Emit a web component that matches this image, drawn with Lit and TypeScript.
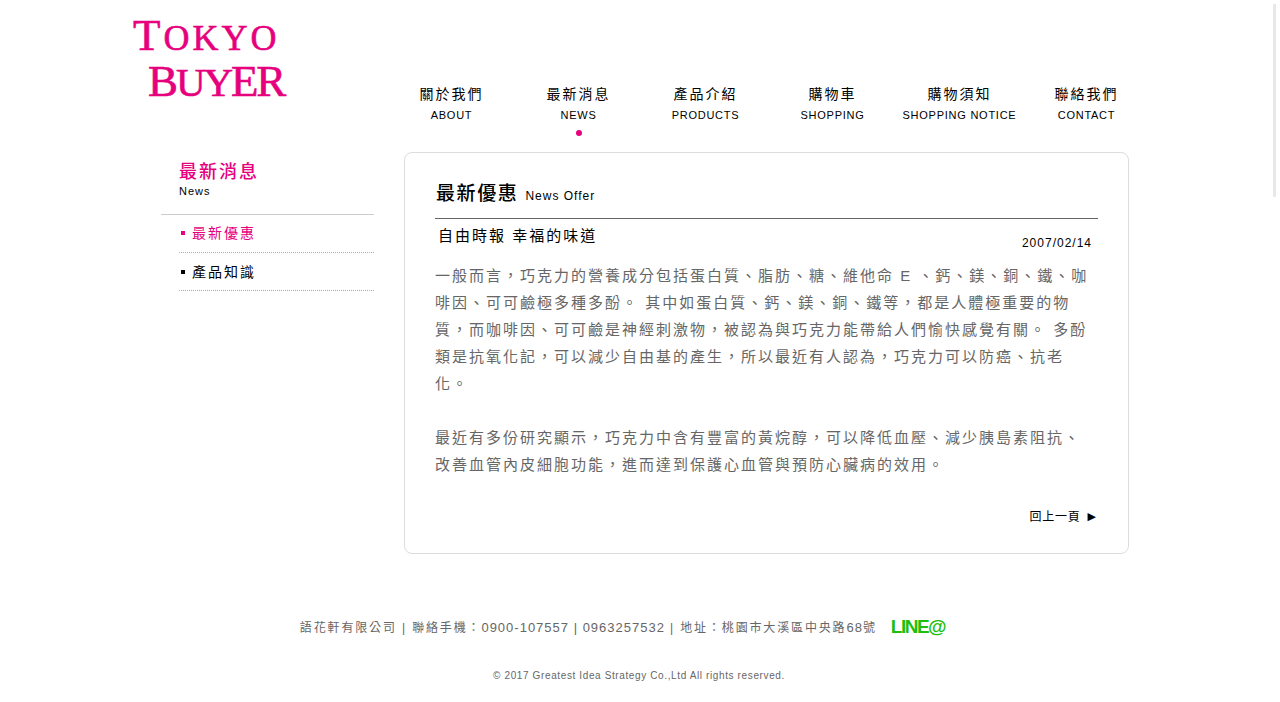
import { LitElement, html, css } from 'lit';
import { customElement } from 'lit/decorators.js';

const NAV = [
  { zh: '關於我們', en: 'ABOUT' },
  { zh: '最新消息', en: 'NEWS', active: true },
  { zh: '產品介紹', en: 'PRODUCTS' },
  { zh: '購物車', en: 'SHOPPING' },
  { zh: '購物須知', en: 'SHOPPING NOTICE' },
  { zh: '聯絡我們', en: 'CONTACT' },
];

@customElement('app-root')
export class AppRoot extends LitElement {
  static styles = css`
    :host {
      display: block;
      position: relative;
      height: 702px;
      overflow: hidden;
      background: #fff;
      color: #000;
      font-family: "Liberation Sans", "Noto Sans CJK TC", sans-serif;
    }

    .header {
      display: flex;
      height: 152px;
      padding-left: 133px;
    }
    .logo {
      width: 255px;
      padding-top: 11px;
      font-family: "Liberation Serif", serif;
      color: #e6007e;
      line-height: 48px;
      font-size: 36px;
      -webkit-text-stroke: 0.6px #e6007e;
    }
    .logo .line { display: block; white-space: nowrap; }
    .logo .line1 { letter-spacing: 3px; }
    .logo .line2 { padding-left: 15px; margin-top: -5px; font-size: 41px; letter-spacing: -2.1px; }
    .logo b { font-weight: 400; font-size: 45px; }

    .nav {
      display: flex;
      padding-top: 85px;
    }
    .nav-item {
      width: 127px;
      text-align: center;
      white-space: nowrap;
    }
    .nav-zh {
      font-size: 14px;
      line-height: 18px;
      letter-spacing: 2px;
    }
    .nav-en {
      margin-top: 5px;
      font-size: 11px;
      line-height: 14px;
      letter-spacing: 0.75px;
    }
    .dot {
      width: 6px;
      height: 6px;
      margin: 8px auto 0;
      border-radius: 50%;
      background: #e6007e;
    }

    .main {
      display: flex;
      padding-left: 161px;
      gap: 30px;
    }
    .side { width: 213px; }
    .side-head {
      height: 63px;
      padding: 8px 0 0 18px;
      box-sizing: border-box;
      border-bottom: 1px solid #ccc;
    }
    .side-title {
      color: #e6007e;
      font-size: 18px;
      font-weight: 500;
      line-height: 24px;
      letter-spacing: 2px;
    }
    .side-sub {
      font-size: 11px;
      line-height: 14px;
      letter-spacing: 1px;
    }
    .side-list { margin-left: 18px; }
    .side-item {
      display: flex;
      align-items: center;
      gap: 7px;
      height: 38px;
      padding: 0 0 3px 2px;
      box-sizing: border-box;
      border-bottom: 1px dotted #aaa;
      font-size: 14px;
      letter-spacing: 2px;
    }
    .side-item + .side-item { padding-bottom: 1px; }
    .side-item::before {
      content: '';
      width: 4px;
      height: 4px;
      margin-top: 2px;
      background: currentColor;
    }
    .side-item.on { color: #e6007e; }

    .card {
      width: 725px;
      height: 402px;
      box-sizing: border-box;
      padding: 28px 30px 0;
      border: 1px solid #ddd;
      border-radius: 8px;
    }
    .card-head {
      display: flex;
      align-items: baseline;
      gap: 7px;
      height: 37px;
      border-bottom: 1px solid #666;
      padding-left: 1px;
    }
    .card-head h1 {
      margin: 0;
      font-size: 19px;
      font-weight: 500;
      line-height: 26px;
      letter-spacing: 1.6px;
    }
    .card-head span {
      font-size: 12px;
      letter-spacing: 1px;
    }
    .article-head {
      display: flex;
      justify-content: space-between;
      align-items: flex-end;
      height: 31px;
      padding: 0 6px 1px 3px;
    }
    .article-title {
      font-size: 15px;
      line-height: 22px;
      letter-spacing: 2px;
      padding-bottom: 3px;
    }
    .article-date {
      font-size: 12px;
      line-height: 14px;
      letter-spacing: 1px;
    }
    .body {
      margin: 11px 0 0;
      width: 655px;
      color: #666;
      font-size: 15px;
      line-height: 27px;
      letter-spacing: 2px;
    }
    .back {
      display: flex;
      justify-content: flex-end;
      align-items: center;
      gap: 7px;
      margin-top: 31px;
      padding-right: 2px;
      font-size: 12px;
      line-height: 16px;
      letter-spacing: 0.75px;
    }
    .back .arrow {
      font-family: "DejaVu Sans", sans-serif;
      letter-spacing: 0;
      font-size: 11px;
    }

    .footer {
      padding-top: 61px;
      color: #666;
      text-align: center;
    }
    .contact {
      display: flex;
      justify-content: center;
      align-items: center;
      gap: 14px;
      height: 22px;
      padding-right: 35px;
      font-size: 12px;
      letter-spacing: 1.85px;
    }
    .num {
      font-size: 13px;
      letter-spacing: 1px;
    }
    .line-at {
      margin-top: 2px;
      color: #1dbf0e;
      font-size: 19px;
      font-weight: 700;
      letter-spacing: -1.5px;
    }
    .copy {
      margin-top: 32px;
      padding-right: 2px;
      font-size: 10px;
      line-height: 14px;
      letter-spacing: 0.62px;
    }

    .scroll-thumb {
      position: absolute;
      top: 4px;
      left: 1273px;
      width: 3px;
      height: 193px;
      background: #e8e8e8;
    }
  `;

  render() {
    return html`
      <div class="header">
        <div class="logo">
          <span class="line line1"><b>T</b>OKYO</span>
          <span class="line line2"><b>B</b>UY<b>ER</b></span>
        </div>
        <div class="nav">
          ${NAV.map(
            (n) => html`
              <div class="nav-item">
                <div class="nav-zh">${n.zh}</div>
                <div class="nav-en">${n.en}</div>
                ${n.active ? html`<div class="dot"></div>` : ''}
              </div>
            `
          )}
        </div>
      </div>
      <div class="main">
        <div class="side">
          <div class="side-head">
            <div class="side-title">最新消息</div>
            <div class="side-sub">News</div>
          </div>
          <div class="side-list">
            <div class="side-item on">最新優惠</div>
            <div class="side-item">產品知識</div>
          </div>
        </div>
        <div class="card">
          <div class="card-head">
            <h1>最新優惠</h1>
            <span>News Offer</span>
          </div>
          <div class="article-head">
            <div class="article-title">自由時報 幸福的味道</div>
            <div class="article-date">2007/02/14</div>
          </div>
          <div class="body">
            一般而言，巧克力的營養成分包括蛋白質、脂肪、糖、維他命 E 、鈣、鎂、銅、鐵、咖啡因、可可鹼極多種多酚。 其中如蛋白質、鈣、鎂、銅、鐵等，都是人體極重要的物質，而咖啡因、可可鹼是神經刺激物，被認為與巧克力能帶給人們愉快感覺有關。 多酚類是抗氧化記，可以減少自由基的產生，所以最近有人認為，巧克力可以防癌、抗老化。<br /><br />
            最近有多份研究顯示，巧克力中含有豐富的黃烷醇，可以降低血壓、減少胰島素阻抗、改善血管內皮細胞功能，進而達到保護心血管與預防心臟病的效用。
          </div>
          <div class="back"><span>回上一頁</span><span class="arrow">▶</span></div>
        </div>
      </div>
      <div class="footer">
        <div class="contact">
          <span>語花軒有限公司 | 聯絡手機：<span class="num">0900-107557 | 0963257532</span> | 地址：桃園市大溪區中央路<span class="num">68</span>號</span>
          <span class="line-at">LINE@</span>
        </div>
        <div class="copy">© 2017 Greatest Idea Strategy Co.,Ltd All rights reserved.</div>
      </div>
      <div class="scroll-thumb"></div>
    `;
  }
}
